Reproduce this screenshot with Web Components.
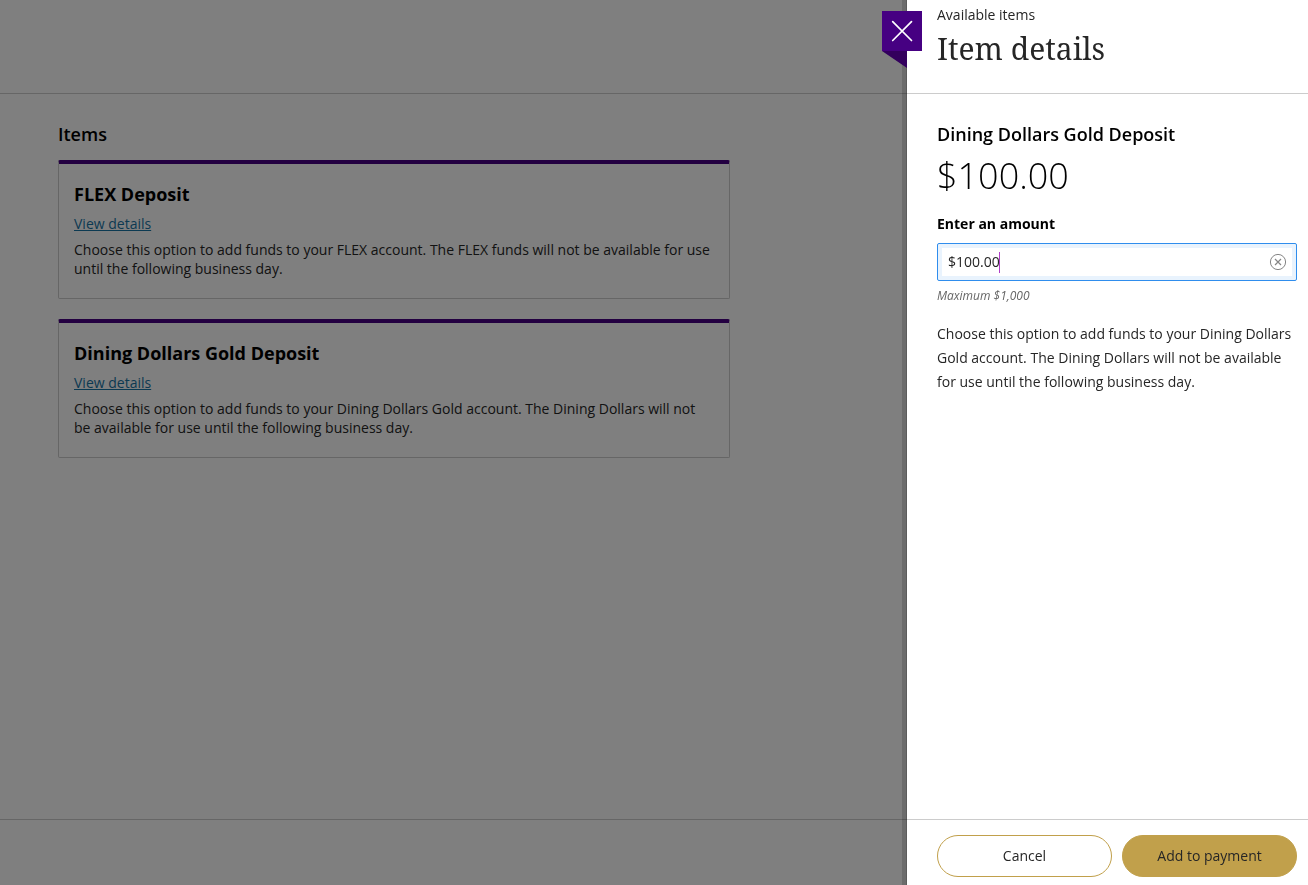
<!DOCTYPE html>
<html lang="en">
<head>
<meta charset="utf-8">
<meta name="viewport" content="width=device-width, initial-scale=1">
<title>Item details</title>
<style>
  body {
    --brand: #460082;
    margin: 0;
    color: #262626;
    background: #fff;
    font: 14px/19px "Open Sans", "Noto Sans", sans-serif;
  }
</style>
</head>
<body>
<store-page>
  <item-card name="FLEX Deposit">Choose this option to add funds to your FLEX account. The FLEX funds will not be available for use until the following business day.</item-card>
  <item-card name="Dining Dollars Gold Deposit">Choose this option to add funds to your Dining Dollars Gold account. The Dining Dollars will not be available for use until the following business day.</item-card>
</store-page>

<item-drawer>
  <close-button slot="close"></close-button>
  <span slot="eyebrow">Available items</span>
  <span slot="title">Item details</span>
  <item-details name="Dining Dollars Gold Deposit" price="$100.00">
    <amount-field slot="field" label="Enter an amount" value="$100.00" hint="Maximum $1,000"></amount-field>
    Choose this option to add funds to your Dining Dollars Gold account. The Dining Dollars will not be available for use until the following business day.
  </item-details>
  <pill-button slot="actions">Cancel</pill-button>
  <pill-button slot="actions" primary>Add to payment</pill-button>
</item-drawer>

<script>
class StorePage extends HTMLElement {
  constructor() {
    super();
    this.attachShadow({mode: 'open'}).innerHTML = `
      <style>
        :host {
          display: flex;
          flex-direction: column;
          min-height: 100vh;
        }
        header {
          box-sizing: border-box;
          height: 94px;
          border-bottom: 1px solid #ccc;
        }
        main {
          flex: 1;
          max-width: 672px;
          padding: 28px 58px;
        }
        h2 {
          margin: 0 0 14px;
          color: #000;
          font-size: 18px;
          font-weight: 600;
          line-height: 24px;
        }
        .list {
          display: flex;
          flex-direction: column;
          gap: 20px;
        }
        footer {
          box-sizing: border-box;
          height: 66px;
          border-top: 1px solid #ccc;
        }
      </style>
      <header></header>
      <main>
        <h2>Items</h2>
        <div class="list"><slot></slot></div>
      </main>
      <footer></footer>
    `;
  }
}

class ItemCard extends HTMLElement {
  connectedCallback() {
    this.attachShadow({mode: 'open'}).innerHTML = `
      <style>
        :host {
          display: block;
          padding: 15px 15px 20px;
          border: 1px solid #ccc;
          border-top: 4px solid var(--brand);
          border-radius: 2px;
        }
        h3 {
          margin: 0 0 5px;
          color: #000;
          font-size: 18px;
          font-weight: 700;
          line-height: 30px;
        }
        a {
          display: inline-block;
          line-height: 20px;
          color: #1874a4;
          text-decoration: underline;
        }
        p {
          margin: 6px 0 0;
        }
      </style>
      <h3>${this.getAttribute('name')}</h3>
      <a href="#details">View details</a>
      <p><slot></slot></p>
    `;
  }
}

class ItemDrawer extends HTMLElement {
  constructor() {
    super();
    this.attachShadow({mode: 'open'}).innerHTML = `
      <style>
        :host {
          position: fixed;
          inset: 0;
          display: flex;
          justify-content: flex-end;
          background: rgba(0, 0, 0, 0.5);
        }
        .panel {
          position: relative;
          display: flex;
          flex-direction: column;
          width: 401px;
          max-width: 90%;
          background: #fff;
          box-shadow: 0 0 0 1px rgba(0, 0, 0, 0.15), 0 0 0 5px rgba(0, 0, 0, 0.15);
        }
        header, .body, footer {
          box-sizing: border-box;
          padding-left: 30px;
          padding-right: 11px;
        }
        header {
          min-height: 94px;
          padding-top: 5px;
          border-bottom: 1px solid #ccc;
        }
        header p {
          margin: 0;
        }
        h1 {
          margin: 4px 0 0;
          font-family: "Noto Serif", "Droid Serif", "DejaVu Serif", serif;
          font-size: 30px;
          font-weight: 400;
          line-height: 42px;
        }
        .body {
          flex: 1;
          padding-top: 28px;
          overflow: auto;
        }
        footer {
          display: flex;
          gap: 10px;
          padding-top: 15px;
          padding-bottom: 8px;
          border-top: 1px solid #ccc;
        }
        .close {
          position: absolute;
          top: 11px;
          left: -25px;
        }
      </style>
      <section class="panel" role="dialog" aria-labelledby="title">
        <div class="close"><slot name="close"></slot></div>
        <header>
          <p><slot name="eyebrow"></slot></p>
          <h1 id="title"><slot name="title"></slot></h1>
        </header>
        <div class="body"><slot></slot></div>
        <footer><slot name="actions"></slot></footer>
      </section>
    `;
  }
}

class CloseButton extends HTMLElement {
  constructor() {
    super();
    this.attachShadow({mode: 'open'}).innerHTML = `
      <style>
        :host {
          display: block;
          width: 40px;
        }
        button {
          display: block;
          width: 40px;
          height: 40px;
          padding: 0;
          border: 0;
          background: var(--brand);
          cursor: pointer;
        }
        svg {
          display: block;
        }
        path {
          stroke: #fff;
          stroke-width: 1.7;
          stroke-linecap: round;
        }
        /* folded ribbon end under the button */
        .fold {
          width: 25px;
          height: 17px;
          background: #33005d;
          clip-path: polygon(0 0, 100% 0, 100% 100%);
        }
      </style>
      <button type="button" aria-label="Close">
        <svg width="40" height="40" viewBox="0 0 40 40"><path d="M10.7 10.7l18.8 18.8M29.5 10.7L10.7 29.5"/></svg>
      </button>
      <div class="fold"></div>
    `;
  }
}

class ItemDetails extends HTMLElement {
  connectedCallback() {
    this.attachShadow({mode: 'open'}).innerHTML = `
      <style>
        :host {
          display: block;
        }
        h2 {
          margin: 0;
          color: #000;
          font-size: 18px;
          font-weight: 600;
          line-height: 24px;
        }
        .price {
          margin: 6px 0 14px;
          color: #000;
          font-size: 36px;
          font-weight: 300;
          line-height: 48px;
        }
        .text {
          margin: 18px 0 0;
          line-height: 24px;
        }
      </style>
      <h2>${this.getAttribute('name')}</h2>
      <p class="price">${this.getAttribute('price')}</p>
      <slot name="field"></slot>
      <p class="text"><slot></slot></p>
    `;
  }
}

class AmountField extends HTMLElement {
  connectedCallback() {
    this.attachShadow({mode: 'open'}).innerHTML = `
      <style>
        :host {
          display: block;
        }
        label {
          display: block;
          margin-bottom: 10px;
          color: #000;
          font-weight: 700;
        }
        .box {
          display: flex;
          align-items: center;
          box-sizing: border-box;
          height: 38px;
          padding: 0 10px;
          border: 1px solid #2f8ded;
          border-radius: 2px;
          box-shadow: inset 0 0 0 4px #e9f3fd;
        }
        .entry {
          position: relative;
          display: flex;
          flex: 1;
          min-width: 0;
        }
        input {
          flex: 1;
          min-width: 0;
          padding: 0 0 2px;
          border: 0;
          outline: 0;
          background: none;
          color: inherit;
          font: inherit;
          caret-color: transparent;
        }
        .caret {
          position: absolute;
          top: 0;
          bottom: 0;
          width: 1px;
          background: #b03cc8;
          pointer-events: none;
        }
        button {
          width: 16px;
          height: 16px;
          padding: 0;
          border: 0;
          background: none;
          cursor: pointer;
        }
        svg {
          display: block;
          fill: none;
          stroke: #858585;
          overflow: visible;
        }
        .hint {
          margin: 6px 0 0;
          color: #666;
          font-size: 12px;
          font-style: italic;
          line-height: 17px;
        }
      </style>
      <label for="amount">${this.getAttribute('label')}</label>
      <div class="box">
        <div class="entry">
          <input id="amount" type="text" aria-describedby="hint" value="${this.getAttribute('value')}">
          <span class="caret"></span>
        </div>
        <button type="button" aria-label="Clear amount">
          <svg width="16" height="16" viewBox="0 0 16 16"><circle cx="8" cy="8" r="7.6"/><path stroke-width="1.2" d="M5 5l6 6M11 5l-6 6"/></svg>
        </button>
      </div>
      <p class="hint" id="hint">${this.getAttribute('hint')}</p>
    `;

    this.input = this.shadowRoot.querySelector('input');
    this.input.addEventListener('input', () => this.moveCaret());
    this.input.addEventListener('keyup', () => this.moveCaret());
    this.input.addEventListener('click', () => this.moveCaret());

    this.shadowRoot.querySelector('button').addEventListener('click', () => {
      this.input.value = '';
      this.input.focus();
      this.moveCaret();
    });

    this.input.focus();
    this.input.setSelectionRange(this.input.value.length, this.input.value.length);
    this.moveCaret();
  }

  // puts the coloured caret after the typed text
  moveCaret() {
    const style = getComputedStyle(this.input);
    const context = document.createElement('canvas').getContext('2d');
    context.font = `${style.fontSize} ${style.fontFamily}`;
    const text = this.input.value.slice(0, this.input.selectionEnd);
    const left = Math.floor(context.measureText(text).width);
    this.shadowRoot.querySelector('.caret').style.left = left + 'px';
  }
}

class PillButton extends HTMLElement {
  constructor() {
    super();
    this.attachShadow({mode: 'open'}).innerHTML = `
      <style>
        :host {
          display: block;
          flex: 1;
        }
        button {
          width: 100%;
          height: 42px;
          padding: 0 10px 2px;
          border: 1px solid #c1a04b;
          border-radius: 21px;
          background: #fff;
          color: #262626;
          font: inherit;
          cursor: pointer;
        }
        :host([primary]) button {
          background: #c1a04b;
        }
      </style>
      <button type="button"><slot></slot></button>
    `;
  }
}

customElements.define('store-page', StorePage);
customElements.define('item-card', ItemCard);
customElements.define('item-drawer', ItemDrawer);
customElements.define('close-button', CloseButton);
customElements.define('item-details', ItemDetails);
customElements.define('amount-field', AmountField);
customElements.define('pill-button', PillButton);
</script>
</body>
</html>
